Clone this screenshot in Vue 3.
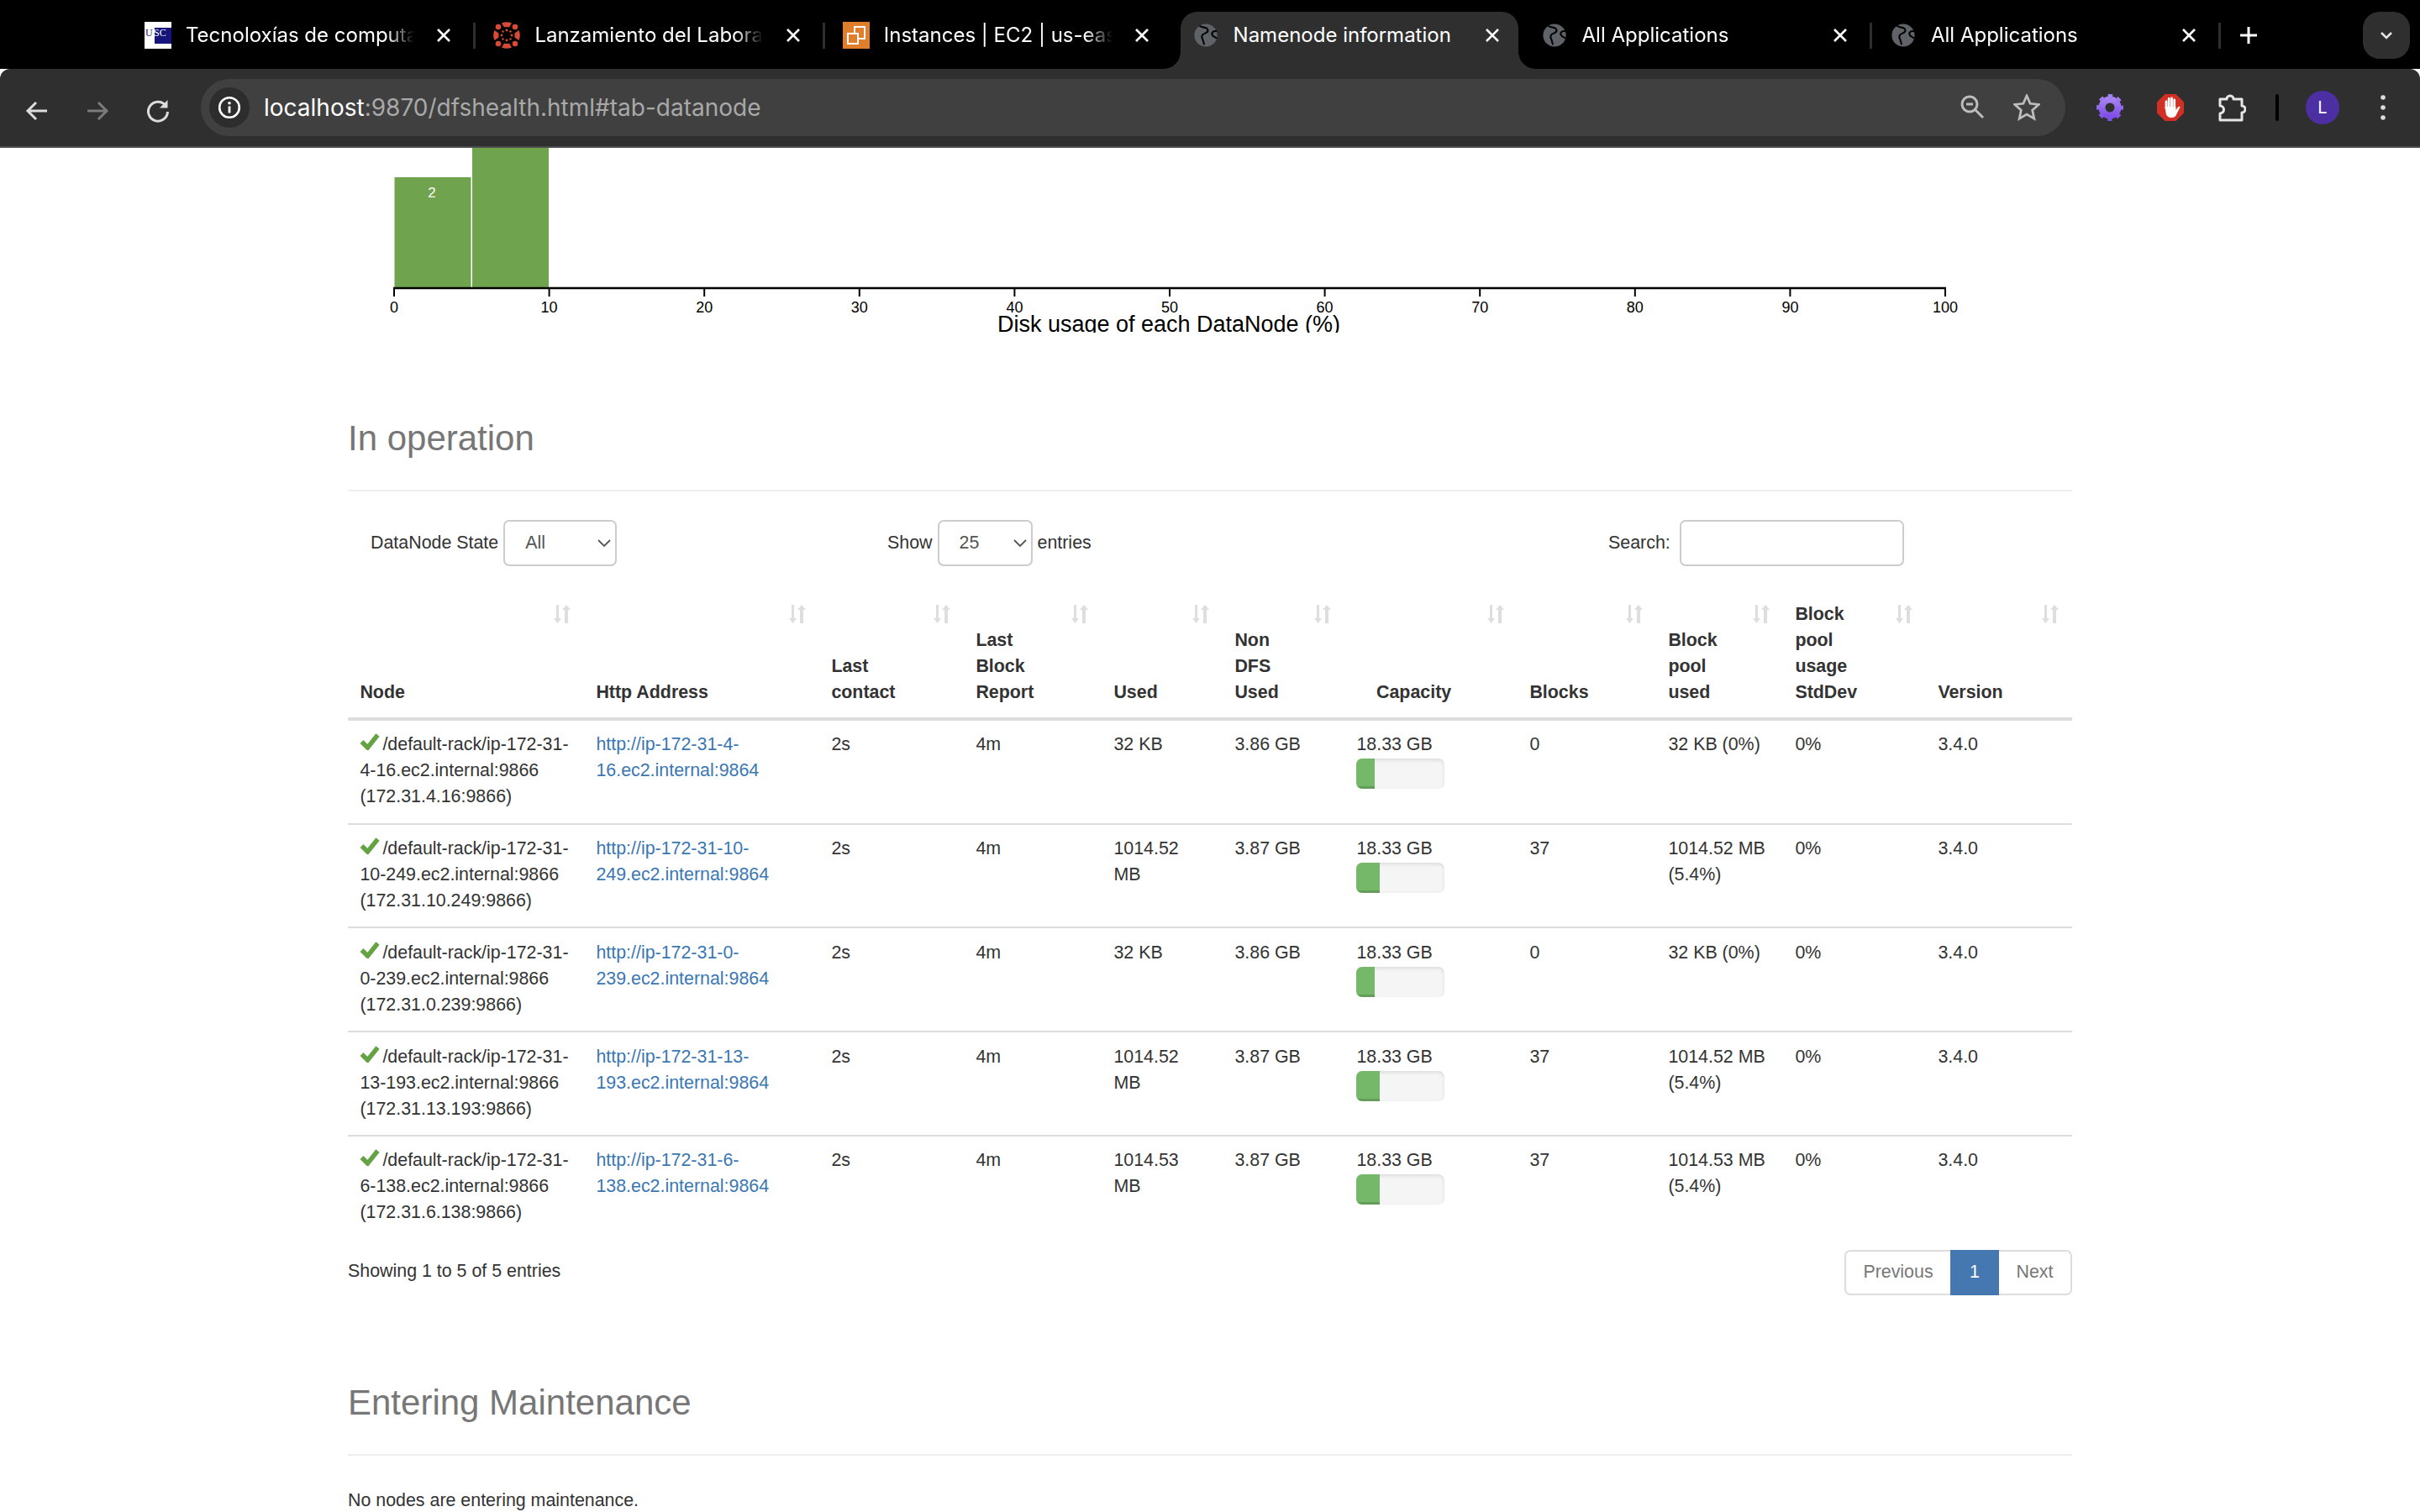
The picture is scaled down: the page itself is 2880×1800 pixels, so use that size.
<template>
  <div class="window">
    <div class="tabstrip">
      <div
        v-for="(t, i) in tabs"
        :key="i"
        class="tab"
        :class="{ active: t.active, nosep: tabs[i + 1] && tabs[i + 1].active }"
      >
        <span class="favicon">
          <svg v-if="t.icon === 'usc'" viewBox="0 0 32 32" width="32" height="32">
            <rect width="32" height="32" fill="#fff" />
            <rect x="12" y="7" width="20" height="19" fill="#14147a" />
            <text x="1" y="17" font-size="12" font-family="Liberation Serif, serif" fill="#14147a">U</text>
            <text x="11" y="17" font-size="12" font-family="Liberation Serif, serif" fill="#fff">SC</text>
          </svg>
          <svg v-else-if="t.icon === 'canvas'" viewBox="0 0 32 32" width="32" height="32" fill="#d64a36">
            <path d="M10 1.500a15 15 0 0 1 12 0L19 6.500a9 9 0 0 0-6 0z" />
            <path d="M10 30.500a15 15 0 0 0 12 0L19 25.500a9 9 0 0 1-6 0z" />
            <path d="M1.500 10l5 3.500v5l-5 3.500a15 15 0 0 1 0-12z" />
            <path d="M30.500 10l-5 3.500v5l5 3.500a15 15 0 0 0 0-12z" />
            <circle cx="6" cy="6" r="3.300" />
            <circle cx="26" cy="6" r="3.300" />
            <circle cx="6" cy="26" r="3.300" />
            <circle cx="26" cy="26" r="3.300" />
            <circle cx="16" cy="10" r="1.400" />
            <circle cx="16" cy="22" r="1.400" />
            <circle cx="10" cy="16" r="1.400" />
            <circle cx="22" cy="16" r="1.400" />
            <circle cx="11.500" cy="11.500" r="1.200" />
            <circle cx="20.500" cy="11.500" r="1.200" />
            <circle cx="11.500" cy="20.500" r="1.200" />
            <circle cx="20.500" cy="20.500" r="1.200" />
          </svg>
          <svg v-else-if="t.icon === 'ec2'" viewBox="0 0 32 32" width="32" height="32">
            <rect width="32" height="32" fill="#df7f2b" />
            <rect x="14" y="6" width="12" height="14" fill="none" stroke="#fff" stroke-width="2" />
            <rect x="6" y="14" width="12" height="12" fill="#df7f2b" stroke="#fff" stroke-width="2" />
          </svg>
          <svg v-else viewBox="0 0 32 32" width="30" height="30">
            <circle cx="16" cy="16" r="14.500" fill="#5f6368" />
            <path d="M8 4c4 3 8 1 10 4s-1 5-4 6-4 4-2 7l2 7M30 11c-4-1-7 1-6 4s4 3 6 5" fill="none" stroke="#000" stroke-width="2.200" />
          </svg>
        </span>
        <span class="tab-title">{{ t.title }}</span>
        <svg class="tab-close" viewBox="0 0 18 18" width="18" height="18">
          <path d="M2 2l14 14M16 2L2 16" stroke="#fff" stroke-width="2.600" fill="none" />
        </svg>
      </div>
      <svg class="newtab" viewBox="0 0 22 22" width="22" height="22">
        <path d="M11 1v20M1 11h20" stroke="#fff" stroke-width="3" />
      </svg>
      <div class="tabsearch">
        <svg viewBox="0 0 16 10" width="16" height="10">
          <path d="M2 2l6 6 6-6" fill="none" stroke="#e4e4e4" stroke-width="2.600" />
        </svg>
      </div>
    </div>

    <div class="toolbar">
      <svg class="navicon" viewBox="0 0 32 32" width="32" height="32">
        <path d="M28 16H6M15 6L5 16l10 10" fill="none" stroke="#dcdcdc" stroke-width="3" />
      </svg>
      <svg class="navicon" viewBox="0 0 32 32" width="32" height="32">
        <path d="M4 16h22M17 6l10 10-10 10" fill="none" stroke="#7b7b7b" stroke-width="3" />
      </svg>
      <svg class="navicon" viewBox="0 0 32 32" width="32" height="32">
        <path d="M25 9.500A11.500 11.500 0 1 0 27.500 17" fill="none" stroke="#dcdcdc" stroke-width="3" />
        <path d="M27.500 3v9.500H18z" fill="#dcdcdc" />
      </svg>

      <div class="omnibox">
        <span class="site-chip">
          <svg viewBox="0 0 28 28" width="28" height="28">
            <circle cx="14" cy="14" r="11.800" fill="none" stroke="#fff" stroke-width="2.600" />
            <circle cx="14" cy="8.800" r="1.800" fill="#fff" />
            <path d="M14 12.500v8" stroke="#fff" stroke-width="2.800" />
          </svg>
        </span>
        <span class="url"><span class="host">localhost</span>:9870/dfshealth.html#tab-datanode</span>
        <svg class="omni-zoom" viewBox="0 0 30 30" width="30" height="30">
          <circle cx="12" cy="11" r="9" fill="none" stroke="#bdbdbd" stroke-width="3" />
          <path d="M8 11h8" stroke="#bdbdbd" stroke-width="3" />
          <path d="M18.500 17.500L28 27" stroke="#bdbdbd" stroke-width="3" />
        </svg>
        <svg class="omni-star" viewBox="0 0 32 32" width="32" height="32">
          <polygon
            points="16,2 20.100,11.300 30.300,12.400 22.700,19.200 24.800,29.100 16,24 7.200,29.100 9.300,19.200 1.700,12.400 11.900,11.300"
            fill="none"
            stroke="#bdbdbd"
            stroke-width="2.800"
          />
        </svg>
      </div>

      <svg class="ext ext-gear" viewBox="0 0 32 32" width="32" height="32">
        <defs>
          <linearGradient id="gear-fill" x1="0" y1="0" x2="0" y2="1">
            <stop offset="0" stop-color="#a583f2" />
            <stop offset="1" stop-color="#7f4fe6" />
          </linearGradient>
        </defs>
        <circle cx="16" cy="16" r="9.500" fill="none" stroke="url(#gear-fill)" stroke-width="8" />
        <circle cx="16" cy="16" r="13.500" fill="none" stroke="url(#gear-fill)" stroke-width="5" stroke-dasharray="5.300 5.300" stroke-dashoffset="2.650" />
      </svg>
      <svg class="ext ext-stop" viewBox="0 0 32 32" width="32" height="32">
        <polygon points="9.500,0 22.500,0 32,9.500 32,22.500 22.500,32 9.500,32 0,22.500 0,9.500" fill="#d33025" />
        <path d="M11 17V9M14.200 15V5.500M17.500 15V5M20.700 16V7" stroke="#fff" stroke-width="2.800" stroke-linecap="round" />
        <path d="M9.500 15h13v4l3.500-4.500 1.500 1-4 8c-1 3-3 4.500-6 4.500-4 0-6.500-2-7-6z" fill="#fff" />
      </svg>
      <svg class="ext ext-puzzle" viewBox="0 0 36 36" width="36" height="36">
        <path
          d="M5 8h8a4 4 0 0 1 8 0h10v8a4 4 0 0 1 0 8v9H5v-8a4.500 4.500 0 0 0 0-9z"
          fill="none"
          stroke="#e6e6e6"
          stroke-width="3"
          stroke-linejoin="round"
        />
      </svg>
      <span class="toolsep"></span>
      <span class="avatar">L</span>
      <svg class="menu" viewBox="0 0 8 32" width="8" height="32" fill="#dcdcdc">
        <circle cx="4" cy="4" r="2.800" />
        <circle cx="4" cy="16" r="2.800" />
        <circle cx="4" cy="28" r="2.800" />
      </svg>
    </div>

    <main class="page">
      <div class="container">
        <svg class="histogram" viewBox="0 0 2052 220" width="2052" height="220">
          <rect x="55.500" y="35" width="91" height="132" fill="#6fa34d" />
          <rect x="148" y="-20" width="91" height="187" fill="#6fa34d" />
          <text x="100" y="59" class="bar-label">2</text>
          <path d="M54 167H1902" stroke="#000" stroke-width="2.500" fill="none" />
          <g v-for="tick in ticks" :key="tick">
            <path :d="`M${55 + tick * 18.46} 167v10`" stroke="#000" stroke-width="2" />
            <text :x="55 + tick * 18.46" y="196" class="tick-label">{{ tick }}</text>
          </g>
          <text x="977" y="219" class="axis-title">Disk usage of each DataNode (%)</text>
        </svg>

        <h3 class="section-title first">In operation</h3>
        <hr />

        <div class="filters">
          <div class="filter-state">
            <span>DataNode State</span>
            <div class="select state-select">
              <span>All</span>
              <svg viewBox="0 0 16 10" width="16" height="10"><path d="M1 1l7 7 7-7" fill="none" stroke="#555" stroke-width="1.800" /></svg>
            </div>
          </div>
          <div class="filter-length">
            <span>Show</span>
            <div class="select length-select">
              <span>25</span>
              <svg viewBox="0 0 16 10" width="16" height="10"><path d="M1 1l7 7 7-7" fill="none" stroke="#555" stroke-width="1.800" /></svg>
            </div>
            <span>entries</span>
          </div>
          <div class="filter-search">
            <span>Search:</span>
            <div class="search-input"></div>
          </div>
        </div>

        <table class="nodes">
          <colgroup>
            <col v-for="(c, i) in columns" :key="i" :style="{ width: `${c.width}px` }" />
          </colgroup>
          <thead>
            <tr>
              <th v-for="(c, i) in columns" :key="i" :class="{ 'th-capacity': c.lines[0] === 'Capacity' }">
                <span v-for="l in c.lines" :key="l" class="line">{{ l }}</span>
                <svg class="sort-icon" viewBox="0 0 20 22" width="20" height="22" fill="#dedede">
                  <path d="M3 0h3v16h3l-4.500 6L0 16h3z" />
                  <path d="M13 22h4V6h3l-5-6-5 6h3z" />
                </svg>
              </th>
            </tr>
          </thead>
          <tbody>
            <tr v-for="n in nodes" :key="n.host">
              <td>
                <svg class="check" viewBox="0 0 24 21" width="24" height="21">
                  <path d="M2.500 11l7 7L21.500 3" fill="none" stroke="#64a244" stroke-width="5.500" />
                </svg>
                <span>/default-rack/ip-172-31-</span>
                <span class="line">{{ n.host }}.ec2.internal:9866</span>
                <span class="line">({{ n.ip }}:9866)</span>
              </td>
              <td>
                <a class="line" href="#">http://ip-172-31-{{ n.host.split('-')[0] }}-</a>
                <a class="line" href="#">{{ n.host.split('-')[1] }}.ec2.internal:9864</a>
              </td>
              <td>2s</td>
              <td>4m</td>
              <td>{{ n.used }}</td>
              <td>{{ n.nonDfs }}</td>
              <td>
                18.33 GB
                <div class="progress">
                  <div class="progress-bar" :style="{ width: `${n.pct}%` }"></div>
                </div>
              </td>
              <td>{{ n.blocks }}</td>
              <td>{{ n.pool }}</td>
              <td>0%</td>
              <td>3.4.0</td>
            </tr>
          </tbody>
        </table>

        <div class="table-footer">
          <span class="info">Showing 1 to 5 of 5 entries</span>
          <div class="pagination">
            <span class="page-item prev">Previous</span>
            <span class="page-item current">1</span>
            <span class="page-item next">Next</span>
          </div>
        </div>

        <h3 class="section-title second">Entering Maintenance</h3>
        <hr />
        <p class="empty">No nodes are entering maintenance.</p>
      </div>
    </main>
  </div>
</template>

<script setup>
// titles stop where the tab fades them out in the browser
const tabs = [
  { title: 'Tecnoloxías de computac', icon: 'usc' },
  { title: 'Lanzamiento del Laborat', icon: 'canvas' },
  { title: 'Instances | EC2 | us-east', icon: 'ec2' },
  { title: 'Namenode information', icon: 'globe', active: true },
  { title: 'All Applications', icon: 'globe' },
  { title: 'All Applications', icon: 'globe' },
];

const ticks = [0, 10, 20, 30, 40, 50, 60, 70, 80, 90, 100];

const columns = [
  { width: 281, lines: ['Node'] },
  { width: 280, lines: ['Http Address'] },
  { width: 172, lines: ['Last', 'contact'] },
  { width: 164, lines: ['Last', 'Block', 'Report'] },
  { width: 144, lines: ['Used'] },
  { width: 145, lines: ['Non', 'DFS', 'Used'] },
  { width: 206, lines: ['Capacity'] },
  { width: 165, lines: ['Blocks'] },
  { width: 151, lines: ['Block', 'pool', 'used'] },
  { width: 170, lines: ['Block', 'pool', 'usage', 'StdDev'] },
  { width: 174, lines: ['Version'] },
];

const nodes = [
  { host: '4-16', ip: '172.31.4.16', used: '32 KB', nonDfs: '3.86 GB', pct: 21, blocks: 0, pool: '32 KB (0%)' },
  { host: '10-249', ip: '172.31.10.249', used: '1014.52 MB', nonDfs: '3.87 GB', pct: 26, blocks: 37, pool: '1014.52 MB (5.4%)' },
  { host: '0-239', ip: '172.31.0.239', used: '32 KB', nonDfs: '3.86 GB', pct: 21, blocks: 0, pool: '32 KB (0%)' },
  { host: '13-193', ip: '172.31.13.193', used: '1014.52 MB', nonDfs: '3.87 GB', pct: 26, blocks: 37, pool: '1014.52 MB (5.4%)' },
  { host: '6-138', ip: '172.31.6.138', used: '1014.53 MB', nonDfs: '3.87 GB', pct: 26, blocks: 37, pool: '1014.53 MB (5.4%)' },
];
</script>

<style>
html,
body {
  margin: 0;
  background: #fff;
  overflow: hidden;
}
</style>

<style scoped>
.window {
  width: 2880px;
  height: 1800px;
  display: flex;
  flex-direction: column;
  overflow: hidden;
  font-family: "Liberation Sans", Arial, sans-serif;
  background: #fff;
}

/* tabs */
.tabstrip {
  height: 82px;
  flex: none;
  display: flex;
  align-items: flex-start;
  padding: 14px 12px 0 147px;
  box-sizing: border-box;
  background: #000;
}
.tab {
  position: relative;
  flex: 0 0 415.4px;
  height: 68px;
  box-sizing: border-box;
  display: flex;
  align-items: flex-start;
  padding: 12px 0 0 25px;
  color: #fff;
  font-family: Inter, "Noto Sans", sans-serif;
  font-size: 24px;
}
.tab::after {
  content: "";
  position: absolute;
  right: -4px;
  top: 13px;
  width: 3px;
  height: 31px;
  background: #2e2e2e;
}
.tab.nosep::after {
  display: none;
}
.tab.active {
  flex: 0 0 402px;
  margin: 0 2px 0 11.400px;
  padding-left: 14px;
  background: #2f2f2f;
  border-radius: 20px 20px 0 0;
}
.tab.active::before,
.tab.active::after {
  content: "";
  position: absolute;
  top: auto;
  bottom: 0;
  width: 20px;
  height: 20px;
}
.tab.active::before {
  right: -20px;
  background: radial-gradient(circle at 100% 0, transparent 19.500px, #2f2f2f 20px);
}
.tab.active::after {
  left: -20px;
  right: auto;
  background: radial-gradient(circle at 0 0, transparent 19.500px, #2f2f2f 20px);
}
.tab.active .tab-title {
  -webkit-mask-image: none;
  mask-image: none;
}
.tab.active .tab-close {
  right: 22px;
}
.favicon {
  width: 32px;
  height: 32px;
  display: flex;
  align-items: center;
  justify-content: center;
  flex: none;
}
.tab-title {
  width: 300px;
  margin: 1px 0 0 17px;
  line-height: 30px;
  white-space: nowrap;
  -webkit-mask-image: linear-gradient(90deg, #000 239px, transparent 272px);
  mask-image: linear-gradient(90deg, #000 239px, transparent 272px);
}
.tab-close {
  position: absolute;
  right: 25px;
  top: 19px;
}
.newtab {
  margin: 17px 0 0 26px;
  flex: none;
}
.tabsearch {
  margin-left: auto;
  width: 56px;
  height: 56px;
  border-radius: 20px;
  background: #2f2f2f;
  display: flex;
  align-items: center;
  justify-content: center;
}

/* toolbar */
.toolbar {
  height: 94px;
  flex: none;
  box-sizing: border-box;
  display: flex;
  align-items: flex-start;
  padding: 12px 0 0 28px;
  background: #2f2f2f;
  border-bottom: 2px solid #4c4c4c;
  border-radius: 12px 12px 0 0;
}
.navicon {
  flex: none;
  margin: 22px 40px 0 0;
}
.omnibox {
  width: 2219px;
  height: 68px;
  margin-left: -5px;
  flex: none;
  box-sizing: border-box;
  display: flex;
  align-items: center;
  padding: 0 0 0 10px;
  border-radius: 34px;
  background: #404040;
}
.site-chip {
  width: 48px;
  height: 48px;
  border-radius: 50%;
  background: #2d2d2d;
  display: flex;
  align-items: center;
  justify-content: center;
  flex: none;
}
.url {
  margin-left: 17px;
  font-family: Inter, "Noto Sans", sans-serif;
  font-size: 28px;
  color: #a9a9a9;
  white-space: nowrap;
}
.host {
  color: #fff;
}
.omni-zoom {
  margin-left: auto;
}
.omni-star {
  margin: 0 30px 0 34px;
}
.ext {
  flex: none;
  margin-top: 18px;
}
.ext-gear {
  margin-left: 37px;
}
.ext-stop {
  margin-left: 40px;
}
.ext-puzzle {
  margin: 16px 0 0 38px;
}
.toolsep {
  width: 4px;
  height: 32px;
  margin: 18px 0 0 35px;
  border-radius: 2px;
  background: #000;
  flex: none;
}
.avatar {
  width: 40px;
  height: 40px;
  margin: 14px 0 0 32px;
  border-radius: 50%;
  background: #4b2fa3;
  color: #fff;
  font-family: Inter, sans-serif;
  font-size: 20px;
  line-height: 40px;
  text-align: center;
  flex: none;
}
.menu {
  flex: none;
  margin: 18px 0 0 48px;
}

/* page */
.page {
  flex: 1;
  min-height: 0;
  overflow: hidden;
  background: #fff;
  color: #333;
  font-size: 21.4px;
  line-height: 31px;
}
.container {
  width: 2052px;
  margin: 0 auto;
}
.histogram {
  display: block;
  overflow: hidden;
  font-family: "Liberation Sans", Arial, sans-serif;
}
.bar-label {
  fill: #fff;
  font-size: 17px;
  text-anchor: middle;
}
.tick-label {
  fill: #000;
  font-size: 18px;
  text-anchor: middle;
}
.axis-title {
  fill: #000;
  font-size: 27px;
  text-anchor: middle;
}
.section-title {
  margin: 0;
  font-size: 42px;
  line-height: 48px;
  font-weight: 400;
  color: #777;
}
.section-title.first {
  margin-top: 102px;
}
.section-title.second {
  margin-top: 104px;
}
hr {
  border: 0;
  border-top: 2px solid #eee;
  margin: 37px 0 0;
}

/* filters */
.filters {
  display: grid;
  grid-template-columns: 642px 858px 1fr;
  margin-top: 34px;
  height: 55px;
}
.filters > div {
  display: flex;
  align-items: center;
}
.filter-state {
  padding-left: 27px;
}
.select {
  height: 55px;
  box-sizing: border-box;
  display: flex;
  align-items: center;
  justify-content: space-between;
  padding: 0 5px 0 24px;
  border: 2px solid #ccc;
  border-radius: 7px;
  color: #555;
  background: #fff;
}
.state-select {
  width: 135px;
  margin-left: 6px;
}
.length-select {
  width: 113px;
  margin: 0 6px 0 6px;
}
.search-input {
  width: 267px;
  height: 55px;
  margin-left: 11px;
  box-sizing: border-box;
  border: 2px solid #ccc;
  border-radius: 7px;
  background: #fff;
}

/* table */
.nodes {
  width: 2052px;
  table-layout: fixed;
  border-collapse: collapse;
  margin-top: 28px;
}
.nodes th {
  position: relative;
  box-sizing: border-box;
  padding: 14.400px 14.400px 13.400px;
  vertical-align: bottom;
  text-align: left;
  font-weight: 700;
  border-bottom: 4px solid #ddd;
  white-space: nowrap;
}
.th-capacity {
  padding-left: 38px !important;
}
.sort-icon {
  position: absolute;
  top: 18px;
  right: 16px;
}
.line {
  display: block;
}
.nodes td {
  padding: 13.400px 14.400px 15.400px;
  vertical-align: top;
  border-bottom: 2px solid #ddd;
}
.nodes tbody tr:last-child td {
  border-bottom: 0;
}
.check {
  vertical-align: 0;
  margin-right: 3px;
}
a {
  color: #3b77b3;
  text-decoration: none;
}
.progress {
  width: 105px;
  height: 36px;
  margin-top: 1px;
  border-radius: 7px;
  overflow: hidden;
  background: #f5f5f5;
  box-shadow: inset 0 2px 4px rgba(0, 0, 0, 0.1);
}
.progress-bar {
  height: 100%;
  background: #76b869;
  box-shadow: inset 0 -3px 0 rgba(0, 0, 0, 0.15);
}

/* footer */
.table-footer {
  display: flex;
  justify-content: space-between;
  align-items: flex-start;
  margin-top: 13px;
}
.info {
  padding-top: 10px;
}
.pagination {
  display: flex;
  height: 54px;
  box-sizing: border-box;
  border: 2px solid #ddd;
  border-radius: 7px;
}
.page-item {
  display: flex;
  align-items: center;
  justify-content: center;
  color: #777;
}
.prev {
  width: 124px;
}
.next {
  width: 85px;
}
.current {
  width: 58px;
  margin: -2px 0;
  background: #4578b0;
  color: #fff;
}
.empty {
  margin: 38px 0 0;
}
</style>
